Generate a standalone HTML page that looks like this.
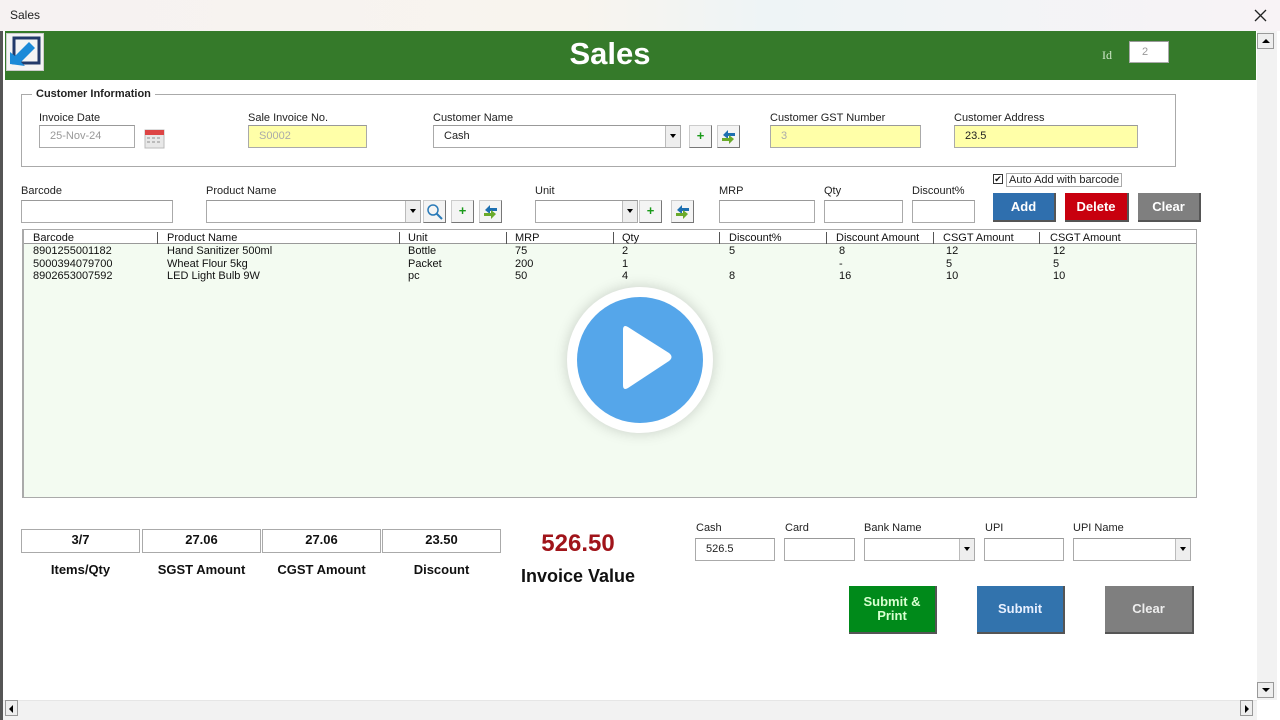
<!DOCTYPE html>
<html><head><meta charset="utf-8"><style>
*{box-sizing:border-box;margin:0;padding:0}
body{width:1280px;height:720px;overflow:hidden;background:#fff;font-family:"Liberation Sans",sans-serif;font-size:11px;color:#111;position:relative}
.a{position:absolute}
.lbl{position:absolute;font-size:11px;color:#222;white-space:nowrap}
.in{position:absolute;background:#fff;border:1px solid #aaa;border-top-color:#999;font-size:11px;padding:4px 0 0 10px;color:#222}
.yel{background:#ffffa8}
.dd{position:absolute;width:15px;background:#eee;border-left:1px solid #bbb;top:0;right:0;bottom:0}
.dd:after{content:"";position:absolute;left:4px;top:8px;border-left:3.5px solid transparent;border-right:3.5px solid transparent;border-top:4px solid #000}
.ib{position:absolute;width:23px;height:23px;background:#f4f4f4;border:1px solid #ccc;border-right-color:#777;border-bottom-color:#777}
.plus{color:#1a9a1a;font-weight:bold;font-size:13px;text-align:center;line-height:20px}
.btn{position:absolute;color:#fff;font-weight:bold;font-size:13px;text-align:center;border-right:2px solid #555;border-bottom:2px solid #555}
.sum{position:absolute;border:1px solid #aaa;height:24px;width:119px;text-align:center;font-weight:bold;font-size:13px;padding-top:2px}
.sl{position:absolute;font-weight:bold;font-size:13px;text-align:center;width:119px}
.row{position:absolute;left:0;font-size:11px;white-space:nowrap}
.row span{position:absolute}
</style></head><body>
<div class="a" style="left:0;top:0;width:1280px;height:31px;background:linear-gradient(90deg,#f6f2f2,#f8f4ee 45%,#eef4f6 60%,#f8f3f6)"></div>
<div class="lbl" style="left:10px;top:8px;font-size:12px">Sales</div>
<svg class="a" style="left:1254px;top:9px" width="13" height="13"><path d="M1 1L12 12M12 1L1 12" stroke="#222" stroke-width="1.3"/></svg>
<div class="a" style="left:0;top:31px;width:3px;height:689px;background:#555"></div>
<div class="a" style="left:5px;top:31px;width:1251px;height:49px;background:#357a2a"></div>
<div class="a" style="left:6px;top:33px;width:38px;height:38px;background:#f4f4f4;border:1px solid #ccc">
<svg width="36" height="36" viewBox="0 0 36 36"><rect x="7" y="4" width="25" height="25" fill="none" stroke="#223a6a" stroke-width="3"/><path d="M3 30 L3 18 L8 22 L22 8 L28 14 L14 28 L18 32 Z" fill="#1a8ad8"/></svg></div>
<div class="a" style="left:540px;top:36px;width:140px;text-align:center;color:#fff;font-weight:bold;font-size:31px">Sales</div>
<div class="lbl" style="left:1102px;top:48px;color:#cfe8c8;font-family:'Liberation Serif',serif;font-size:12px">Id</div>
<div class="in" style="left:1129px;top:41px;width:40px;height:22px;color:#999;padding-left:12px">2</div>
<div class="a" style="left:1257px;top:31px;width:20px;height:669px;background:#f2f2f2"></div>
<div class="a" style="left:1257px;top:33px;width:17px;height:16px;background:#eee;border:1px solid #999"><div style="position:absolute;left:4px;top:5px;border-left:4px solid transparent;border-right:4px solid transparent;border-bottom:4px solid #000"></div></div>
<div class="a" style="left:1257px;top:682px;width:17px;height:16px;background:#eee;border:1px solid #999"><div style="position:absolute;left:4px;top:5px;border-left:4px solid transparent;border-right:4px solid transparent;border-top:4px solid #000"></div></div>
<div class="a" style="left:3px;top:700px;width:1254px;height:20px;background:#f2f2f2;border-top:1px solid #e6e6e6"></div>
<div class="a" style="left:5px;top:700px;width:13px;height:16px;background:#eee;border:1px solid #999"><div style="position:absolute;left:3px;top:4px;border-top:4px solid transparent;border-bottom:4px solid transparent;border-right:4px solid #000"></div></div>
<div class="a" style="left:1240px;top:700px;width:13px;height:16px;background:#eee;border:1px solid #999"><div style="position:absolute;left:4px;top:4px;border-top:4px solid transparent;border-bottom:4px solid transparent;border-left:4px solid #000"></div></div>
<div class="a" style="left:21px;top:94px;width:1155px;height:73px;border:1px solid #aaa"></div>
<div class="lbl" style="left:32px;top:88px;background:#fff;padding:0 4px;font-weight:bold">Customer Information</div>
<div class="lbl" style="left:39px;top:112px">Invoice Date</div>
<div class="in" style="left:39px;top:125px;width:96px;height:23px;color:#999">25-Nov-24</div>
<svg class="a" style="left:144px;top:129px" width="21" height="20"><rect x="1" y="1" width="19" height="18" fill="#e8e8e8" stroke="#bbb"/><rect x="1" y="1" width="19" height="5" fill="#d44"/><g fill="#bbb"><rect x="3" y="8" width="3" height="2"/><rect x="8" y="8" width="3" height="2"/><rect x="13" y="8" width="3" height="2"/><rect x="3" y="12" width="3" height="2"/><rect x="8" y="12" width="3" height="2"/><rect x="13" y="12" width="3" height="2"/></g></svg>
<div class="lbl" style="left:248px;top:112px">Sale Invoice No.</div>
<div class="in yel" style="left:248px;top:125px;width:119px;height:23px;color:#aaa">S0002</div>
<div class="lbl" style="left:433px;top:112px">Customer Name</div>
<div class="in" style="left:433px;top:125px;width:248px;height:23px">Cash<div class="dd"></div></div>
<div class="ib plus" style="left:689px;top:125px">+</div>
<div class="ib" style="left:717px;top:125px"><svg width="21" height="21"><path d="M5 9 L10 4 L10 7 L17 7 L17 10 L10 10 L10 13 Z" fill="#1d6fb0"/><path d="M16 13 L11 18 L11 15 L4 15 L4 12 L11 12 L11 9 Z" fill="#6aaa2a"/></svg></div>
<div class="lbl" style="left:770px;top:112px">Customer GST Number</div>
<div class="in yel" style="left:770px;top:125px;width:151px;height:23px;color:#aaa">3</div>
<div class="lbl" style="left:954px;top:112px">Customer Address</div>
<div class="in yel" style="left:954px;top:125px;width:184px;height:23px">23.5</div>
<div class="lbl" style="left:21px;top:185px">Barcode</div>
<div class="in" style="left:21px;top:200px;width:152px;height:23px"></div>
<div class="lbl" style="left:206px;top:185px">Product Name</div>
<div class="in" style="left:206px;top:200px;width:215px;height:23px"><div class="dd"></div></div>
<div class="ib" style="left:423px;top:200px"><svg width="21" height="21"><circle cx="9" cy="9" r="5" fill="none" stroke="#2a7ab8" stroke-width="1.5"/><path d="M12.5 12.5 L18 18" stroke="#2a7ab8" stroke-width="2"/></svg></div>
<div class="ib plus" style="left:451px;top:200px">+</div>
<div class="ib" style="left:479px;top:200px"><svg width="21" height="21"><path d="M5 9 L10 4 L10 7 L17 7 L17 10 L10 10 L10 13 Z" fill="#1d6fb0"/><path d="M16 13 L11 18 L11 15 L4 15 L4 12 L11 12 L11 9 Z" fill="#6aaa2a"/></svg></div>
<div class="lbl" style="left:535px;top:185px">Unit</div>
<div class="in" style="left:535px;top:200px;width:103px;height:23px"><div class="dd"></div></div>
<div class="ib plus" style="left:639px;top:200px">+</div>
<div class="ib" style="left:671px;top:200px"><svg width="21" height="21"><path d="M5 9 L10 4 L10 7 L17 7 L17 10 L10 10 L10 13 Z" fill="#1d6fb0"/><path d="M16 13 L11 18 L11 15 L4 15 L4 12 L11 12 L11 9 Z" fill="#6aaa2a"/></svg></div>
<div class="lbl" style="left:719px;top:185px">MRP</div>
<div class="in" style="left:719px;top:200px;width:96px;height:23px"></div>
<div class="lbl" style="left:824px;top:185px">Qty</div>
<div class="in" style="left:824px;top:200px;width:79px;height:23px"></div>
<div class="lbl" style="left:912px;top:185px">Discount%</div>
<div class="in" style="left:912px;top:200px;width:63px;height:23px"></div>
<div class="a" style="left:993px;top:174px;width:10px;height:10px;border:1px solid #333;font-size:9px;line-height:8px;text-align:center">✔</div>
<div class="lbl" style="left:1006px;top:173px;border:1px solid #aaa;padding:0 2px">Auto Add with barcode</div>
<div class="btn" style="left:993px;top:193px;width:63px;height:29px;background:#2f6fae;line-height:27px">Add</div>
<div class="btn" style="left:1065px;top:193px;width:64px;height:29px;background:#c8000e;line-height:27px">Delete</div>
<div class="btn" style="left:1138px;top:193px;width:63px;height:29px;background:#7f7f7f;line-height:27px">Clear</div>
<div class="a" style="left:22px;top:229px;width:1175px;height:269px;background:#f3fbf1;border:1px solid #aaa;border-left:2px solid #aaa"></div>
<div class="a" style="left:24px;top:230px;width:1172px;height:14px;background:#fff;border-bottom:1px solid #999"></div>
<div class="row" style="top:232px;width:1200px;height:14px">
<span style="left:33px">Barcode</span><span style="left:157px;border-left:1px solid #555;padding-left:9px">Product Name</span><span style="left:399px;border-left:1px solid #555;padding-left:8px">Unit</span><span style="left:506px;border-left:1px solid #555;padding-left:8px">MRP</span><span style="left:613px;border-left:1px solid #555;padding-left:8px">Qty</span><span style="left:719px;border-left:1px solid #555;padding-left:9px">Discount%</span><span style="left:826px;border-left:1px solid #555;padding-left:9px">Discount Amount</span><span style="left:933px;border-left:1px solid #555;padding-left:9px">CSGT Amount</span><span style="left:1039px;border-left:1px solid #555;padding-left:10px">CSGT Amount</span></div>
<div class="row" style="top:245px"><span style="left:33px">8901255001182</span><span style="left:167px">Hand Sanitizer 500ml</span><span style="left:408px">Bottle</span><span style="left:515px">75</span><span style="left:622px">2</span><span style="left:729px">5</span><span style="left:839px">8</span><span style="left:946px">12</span><span style="left:1053px">12</span></div>
<div class="row" style="top:258px"><span style="left:33px">5000394079700</span><span style="left:167px">Wheat Flour 5kg</span><span style="left:408px">Packet</span><span style="left:515px">200</span><span style="left:622px">1</span><span style="left:839px">-</span><span style="left:946px">5</span><span style="left:1053px">5</span></div>
<div class="row" style="top:270px"><span style="left:33px">8902653007592</span><span style="left:167px">LED Light Bulb 9W</span><span style="left:408px">pc</span><span style="left:515px">50</span><span style="left:622px">4</span><span style="left:729px">8</span><span style="left:839px">16</span><span style="left:946px">10</span><span style="left:1053px">10</span></div>
<div class="sum" style="left:21px;top:529px;width:119px">3/7</div>
<div class="sum" style="left:142px;top:529px">27.06</div>
<div class="sum" style="left:262px;top:529px">27.06</div>
<div class="sum" style="left:382px;top:529px">23.50</div>
<div class="sl" style="left:21px;top:562px">Items/Qty</div>
<div class="sl" style="left:142px;top:562px">SGST Amount</div>
<div class="sl" style="left:262px;top:562px">CGST Amount</div>
<div class="sl" style="left:382px;top:562px">Discount</div>
<div class="a" style="left:508px;top:530px;width:140px;text-align:center;color:#a0141a;font-weight:bold;font-size:24px">526.50</div>
<div class="a" style="left:508px;top:566px;width:140px;text-align:center;font-weight:bold;font-size:18px">Invoice Value</div>
<div class="lbl" style="left:696px;top:522px">Cash</div>
<div class="in" style="left:695px;top:538px;width:80px;height:23px">526.5</div>
<div class="lbl" style="left:785px;top:522px">Card</div>
<div class="in" style="left:784px;top:538px;width:71px;height:23px"></div>
<div class="lbl" style="left:864px;top:522px">Bank Name</div>
<div class="in" style="left:864px;top:538px;width:111px;height:23px"><div class="dd"></div></div>
<div class="lbl" style="left:985px;top:522px">UPI</div>
<div class="in" style="left:984px;top:538px;width:80px;height:23px"></div>
<div class="lbl" style="left:1073px;top:522px">UPI Name</div>
<div class="in" style="left:1073px;top:538px;width:118px;height:23px"><div class="dd"></div></div>
<div class="btn" style="left:849px;top:586px;width:88px;height:48px;background:#008a1a;color:#d8ffd0;padding-top:9px;line-height:14px">Submit &amp;<br>Print</div>
<div class="btn" style="left:977px;top:586px;width:88px;height:48px;background:#3273ad;color:#e8f0ff;line-height:46px">Submit</div>
<div class="btn" style="left:1105px;top:586px;width:89px;height:48px;background:#7f7f7f;color:#eee;line-height:46px">Clear</div>
<div class="a" style="left:567px;top:287px;width:146px;height:146px;border-radius:50%;background:#fff;box-shadow:0 0 14px rgba(0,0,0,0.18)"></div>
<div class="a" style="left:577px;top:297px;width:126px;height:126px;border-radius:50%;background:#55a6ea"></div>
<svg class="a" style="left:617px;top:322px" width="60" height="76"><path d="M6 8 Q6 2 11 5 L52 31 Q57 35 52 39 L11 66 Q6 69 6 63 Z" fill="#fff"/></svg>
</body></html>
